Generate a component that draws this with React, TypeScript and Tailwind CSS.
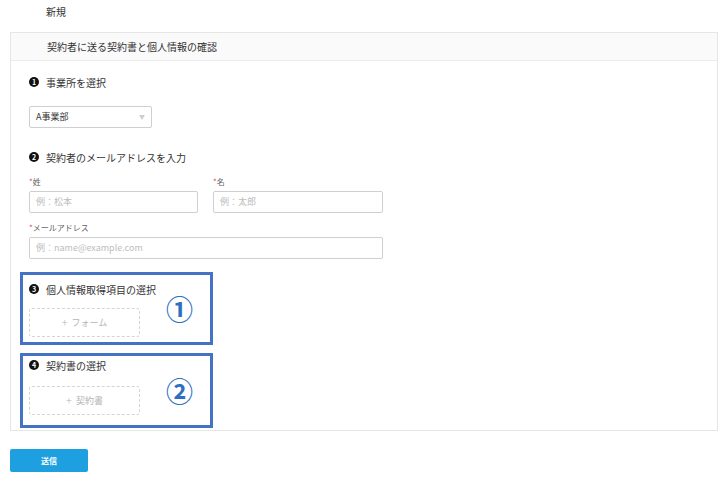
const Num = ({ n }: { n: number }) => (
  <span className="inline-flex h-[10px] w-[10px] items-center justify-center rounded-full bg-[#111] text-[7px] font-bold leading-none text-white">
    {n}
  </span>
);

const Title = ({ n, text }: { n: number; text: string }) => (
  <div className="flex h-4 items-center">
    <Num n={n} />
    <span className="ml-[7px] text-[10px] text-[#333]">{text}</span>
  </div>
);

const Field = ({ label, placeholder, w }: { label: string; placeholder: string; w: string }) => (
  <div className={w}>
    <div className="flex h-3 items-center text-[8px] text-[#666]">
      <span className="text-[#e04848]">*</span>
      {label}
    </div>
    <div className="mt-[3px] flex h-[22px] items-center rounded-[2px] border border-[#cfcfcf] px-[6px] text-[9px] text-[#bdbdbd]">
      {placeholder}
    </div>
  </div>
);

const AddButton = ({ label }: { label: string }) => (
  <div className="flex h-[29px] w-[111px] items-center justify-center rounded-[3px] border border-dashed border-[#d4d4d4] text-[9px] text-[#b5b5b5]">
    <span className="mr-[4px] text-[11px] font-light">+</span>
    {label}
  </div>
);

export default function App() {
  return (
    <div className="h-[481px] w-[723px] bg-white font-['Noto_Sans_CJK_JP',sans-serif] text-[#333]">
      <div className="flex h-8 items-start pl-[46px] pt-[4px] text-[10px]">新規</div>

      <div className="ml-[10px] w-[708px] border border-[#e6e6e6]">
        <div className="flex h-[28px] items-center border-b border-[#ececec] bg-[#fafafa] pl-[36px] text-[10px]">
          契約者に送る契約書と個人情報の確認
        </div>

        <div className="pl-[18px] pt-[13px] pb-[2px]">
          <Title n={1} text="事業所を選択" />
          <div className="mt-[16px] flex h-[22px] w-[123px] items-center justify-between rounded-[2px] border border-[#cfcfcf] pl-[6px] pr-[6px] text-[9px]">
            <span>A事業部</span>
            <span className="h-0 w-0 border-x-[3.5px] border-t-[5px] border-x-transparent border-t-[#cfcfcf]" />
          </div>

          <div className="mt-[21px]">
            <Title n={2} text="契約者のメールアドレスを入力" />
          </div>
          <div className="mt-[11px] flex gap-[15px]">
            <Field label="姓" placeholder="例：松本" w="w-[169px]" />
            <Field label="名" placeholder="例：太郎" w="w-[170px]" />
          </div>
          <div className="mt-[9px]">
            <Field label="メールアドレス" placeholder="例：name@example.com" w="w-[354px]" />
          </div>

          <div className="-ml-[9px] mt-[13px] flex h-[73px] w-[193px] items-center border-[3px] border-[#4472c4] pr-[17px]">
            <div className="self-start pl-[6px] pt-[6px]">
              <Title n={3} text="個人情報取得項目の選択" />
              <div className="mt-[11px]">
                <AddButton label="フォーム" />
              </div>
            </div>
            <span className="ml-auto text-[27px] font-semibold leading-none text-[#2e6fc2]">①</span>
          </div>

          <div className="-ml-[9px] mt-[8px] flex h-[75px] w-[193px] items-center border-[3px] border-[#4472c4] pr-[17px]">
            <div className="self-start pl-[6px] pt-[1px]">
              <Title n={4} text="契約書の選択" />
              <div className="mt-[13px]">
                <AddButton label="契約書" />
              </div>
            </div>
            <span className="ml-auto text-[27px] font-semibold leading-none text-[#2e6fc2]">②</span>
          </div>
        </div>
      </div>

      <button className="ml-[10px] mt-[18px] flex h-[23px] w-[78px] items-center justify-center rounded-[2px] bg-[#1e9fe0] text-[8px] font-bold text-white">
        送信
      </button>
    </div>
  );
}
